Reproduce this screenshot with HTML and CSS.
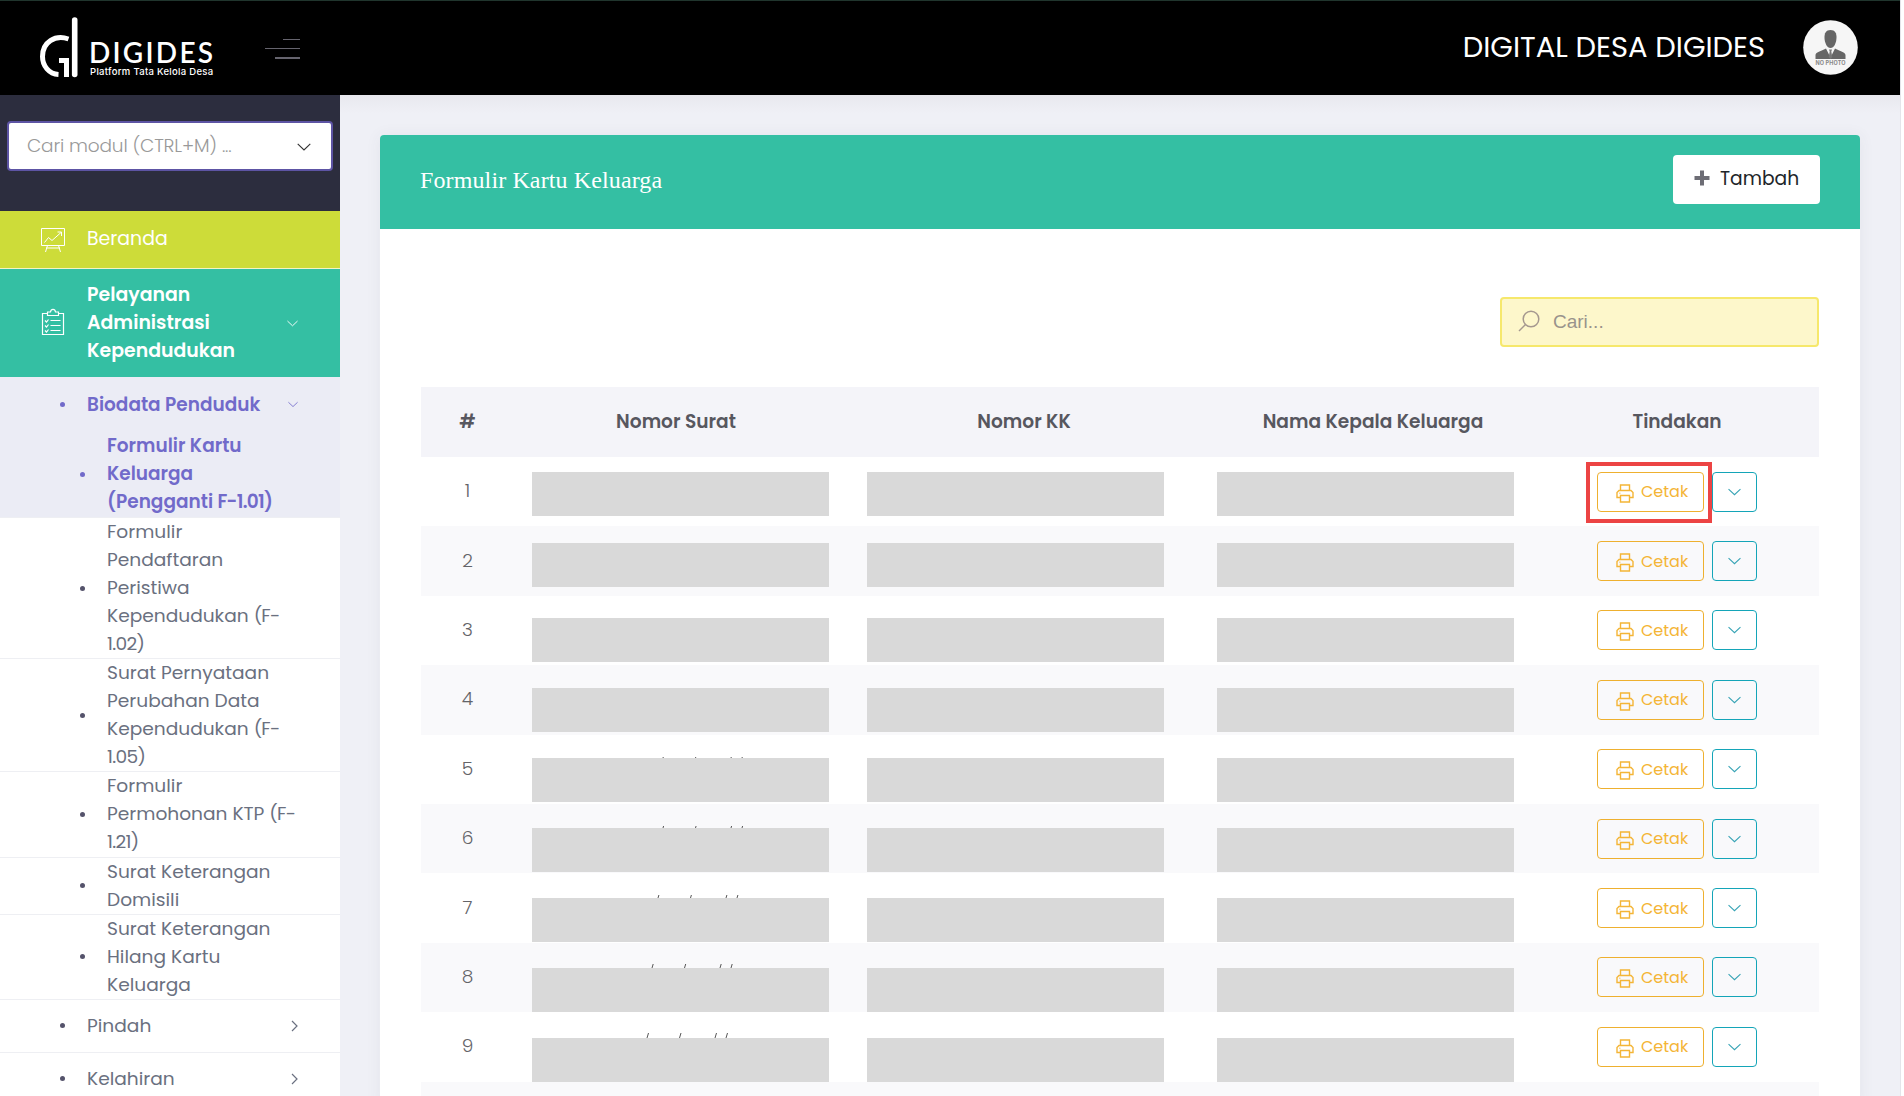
FILE: index.html
```
<!DOCTYPE html>
<html lang="id">
<head>
<meta charset="utf-8">
<title>Formulir Kartu Keluarga</title>
<link rel="stylesheet" href="styles.css">
</head>
<body>
<svg class="defs" width="0" height="0">
  <symbol id="down" viewBox="0 0 12 7"><path d="M.5 .8 6 6 11.5 .8" fill="none" stroke="currentColor"/></symbol>
  <symbol id="right" viewBox="0 0 7 12"><path d="M1 1 6 6 1 11" fill="none" stroke="currentColor" stroke-width="1.2"/></symbol>
  <symbol id="printer" viewBox="0 0 18 19"><path d="M4.5 6.500V1h9v5.500M4.500 13.500H1V8.500L3 6.500H15L17 8.500V13.500H13.500M4.500 11.500H13.500V18H4.500ZM3.500 9.200h.8" fill="none" stroke="currentColor" stroke-width="1.4"/></symbol>
</svg>
<div class="page">
  <header class="topbar">
    <div class="brand">
      <svg class="mark" width="40" height="62" viewBox="0 0 40 62" fill="none" stroke="#fff">
        <path d="M29.500 23C16 18.500 3.500 26 3.500 40.500C3.500 50 10 58 19.500 58.500" stroke-width="5"/>
        <path d="M20 44.500H27.500V61" stroke-width="5"/>
        <path d="M35.700 4V58.500" stroke-width="5.600" stroke-linecap="round"/>
      </svg>
      <div class="wordmark"><span class="name">DIGIDES</span><span class="tagline">Platform Tata Kelola Desa</span></div>
    </div>
    <div class="toggle"><i class="l1"></i><i class="l2"></i><i class="l3"></i></div>
    <div class="village">DIGITAL DESA DIGIDES</div>
    <svg class="avatar" width="55" height="55" viewBox="0 0 55 55">
      <circle cx="27.500" cy="27.500" r="27.300" fill="#f6f6f6"/>
      <path d="M27.500 10c4.500 0 6.200 3 6 8-.2 5-2.500 10-6 10s-5.800-5-6-10c-.2-5 1.500-8 6-8Z" fill="#666"/>
      <path d="M12.500 39v-4c0-3 7-4.500 10.500-6.500l4.500 9 4.500-9c3.500 2 10.500 3.500 10.500 6.500v4Z" fill="#666"/>
      <path d="M26 29.500h3l-.7 2 1 5.500-1.800 2-1.800-2 1-5.500Z" fill="#777"/>
      <text x="27.500" y="45.300" text-anchor="middle" textLength="30" class="nophoto">NO PHOTO</text>
    </svg>
  </header>
  <aside class="sidebar">
    <div class="module-search"><div class="select"><span>Cari modul (CTRL+M) ...</span><svg width="14" height="8"><use href="#down"/></svg></div></div>
    <div class="item home">
      <svg class="ico" width="26" height="26" viewBox="0 0 26 26" fill="none" stroke="currentColor" stroke-width="1"><path d="M1.500 1.500H24.500V18.500H1.500ZM4.500 15.500 8.500 10.500 12 13.500 21 5.500M17.500 5H21.500V9M6 21H20M7.500 18.500 5.500 25M18.500 18.500 20.500 25"/></svg>
      <span class="label">Beranda</span>
    </div>
    <div class="item service">
      <svg class="ico" width="26" height="28" viewBox="0 0 26 28" fill="none" stroke="currentColor" stroke-width="1.200"><path d="M8 5.500H2.500V26.500H23.500V5.500H18M7.500 7.500V4H10.500C11 .5 15 .5 15.500 4H18.500V7.500ZM10.500 12.500H20.500M10.500 17.500H20.500M10.500 22.500H20.500M5 12.500 6.500 14 8.500 11.500M5 17.500 6.500 19 8.500 16.500M5 22.500 6.500 24 8.500 21.500"/></svg>
      <span class="label bold">Pelayanan<br>Administrasi<br>Kependudukan</span>
      <svg class="arrow" width="11" height="7"><use href="#down"/></svg>
    </div>
    <div class="active-group">
      <div class="sub lead"><i class="dot"></i><span class="label bold">Biodata Penduduk</span><svg class="arrow" width="10" height="7"><use href="#down"/></svg></div>
      <div class="leaf"><i class="dot"></i><span class="label bold">Formulir Kartu<br>Keluarga<br>(Pengganti <span class="code">F-1.01)</span></span></div>
    </div>
    <div class="leaf"><i class="dot"></i><span class="label">Formulir<br>Pendaftaran<br>Peristiwa<br>Kependudukan <span class="code">(F-<br>1.02)</span></span></div>
    <div class="leaf"><i class="dot"></i><span class="label">Surat Pernyataan<br>Perubahan Data<br>Kependudukan <span class="code">(F-<br>1.05)</span></span></div>
    <div class="leaf"><i class="dot"></i><span class="label">Formulir<br>Permohonan KTP <span class="code">(F-<br>1.21)</span></span></div>
    <div class="leaf"><i class="dot"></i><span class="label">Surat Keterangan<br>Domisili</span></div>
    <div class="leaf"><i class="dot"></i><span class="label">Surat Keterangan<br>Hilang Kartu<br>Keluarga</span></div>
    <div class="sub"><i class="dot"></i><span class="label">Pindah</span><svg class="arrow" width="7" height="12"><use href="#right"/></svg></div>
    <div class="sub"><i class="dot"></i><span class="label">Kelahiran</span><svg class="arrow" width="7" height="12"><use href="#right"/></svg></div>
  </aside>
  <main class="content">
    <section class="card">
      <div class="card-head">
        <h1>Formulir Kartu Keluarga</h1>
        <button class="add"><svg width="16" height="16" viewBox="0 0 16 16"><path d="M6 .5h4V6h5.500v4H10v5.500H6V10H.5V6H6Z" fill="#6d6d75"/></svg><span>Tambah</span></button>
      </div>
      <div class="card-body">
        <div class="search"><svg width="22" height="22" viewBox="0 0 22 22" fill="none" stroke="#a5988f" stroke-width="1.500"><circle cx="13" cy="9" r="7.800"/><path d="M7.500 14.500 1 21"/></svg><span>Cari...</span></div>
        <div class="table" id="table">
          <div class="row head"><span>#</span><span>Nomor Surat</span><span>Nomor KK</span><span>Nama Kepala Keluarga</span><span>Tindakan</span></div>
        </div>
      </div>
    </section>
  </main>
</div>
<script src="table.js"></script>
</body>
</html>
```
FILE: table.js
```
const table = document.getElementById('table');
// offset: top of the masks inside the row; ticks: [first x, height] of strokes above the mask
const rows = [
  { offset: 15 }, { offset: 16.6 }, { offset: 22.2 }, { offset: 22.8 },
  { offset: 23.4, ticks: [131, 1] }, { offset: 24, ticks: [131, 2] },
  { offset: 24.6, ticks: [126, 3] }, { offset: 25.2, ticks: [120, 4] },
  { offset: 25.8, ticks: [115, 5] }
];
rows.forEach((r, i) => {
  const mask = c => `<span class="cell"><i class="mask ${c}" style="top:${r.offset}px"></i></span>`;
  let strokes = '';
  if (r.ticks) {
    const [x, h] = r.ticks;
    strokes = `<svg class="ticks" width="297" height="${h}" style="top:${r.offset - h}px">` +
      [0, 32.500, 68, 79].map(d => `<path d="M${x + d} ${h}l${h * 0.3} ${-h}" stroke="#555"/>`).join('') + '</svg>';
  }
  const row = document.createElement('div');
  row.className = 'row';
  row.innerHTML = `<span class="num">${i + 1}</span>` +
    `<span class="cell"><i class="mask a" style="top:${r.offset}px"></i>${strokes}</span>` + mask('b') + mask('c') +
    `<span class="actions"><button class="print"><svg width="18" height="19"><use href="#printer"/></svg><span>Cetak</span></button>` +
    `<button class="more"><svg width="13" height="8"><use href="#down"/></svg></button>${i === 0 ? '<i class="highlight"></i>' : ''}</span>`;
  table.append(row);
});
const next = document.createElement('div');
next.className = 'row';
table.append(next);
```
FILE: styles.css
```
* { box-sizing: border-box; }
body { margin: 0; height: 1096px; overflow: hidden; background: #fff; font-family: Poppins, Inter, "Open Sans", sans-serif; font-feature-settings: "cv11"; color: #6a7080; }
.defs { position: absolute; }
.page { display: grid; grid-template-columns: 340px 1fr; grid-template-rows: 95px 1001px; width: 1901px; height: 1096px; border-right: 1px solid #e4e5ea; overflow: hidden; }
.topbar { grid-column: 1 / 3; display: flex; background: #000; border-top: 1px solid #20352d; position: relative; margin-right: -1px; }
.topbar::after { content: ""; position: absolute; left: 340px; right: 0; top: 94px; height: 18px; background: linear-gradient(#e8e8ee, #eff0f600); }
.brand { display: flex; width: 265px; padding: 15px 0 0 39px; gap: 10px; }
.mark { flex: none; }
.wordmark { display: flex; flex-direction: column; color: #fff; padding-top: 22px; }
.name { font: 600 28px/28px Lato, sans-serif; letter-spacing: 2.25px; white-space: nowrap; }
.tagline { font: 500 9.500px/12px Inter, sans-serif; white-space: nowrap; margin: 0 0 0 1px; letter-spacing: .3px; }
.toggle { display: flex; flex-direction: column; align-items: flex-end; gap: 8px; width: 35px; padding-top: 38px; }
.toggle i { height: 1px; background: #66646e; }
.l1 { width: 17px; } .l2 { width: 35px; } .toggle .l3 { width: 25px; height: 2px; }
.village { margin-left: auto; color: #fff; font-size: 29px; line-height: 93px; font-weight: 400; white-space: nowrap; }
.avatar { margin: 19px 43px 0 38px; }
.nophoto { font: 700 5.500px Inter, sans-serif; fill: #888; }
.sidebar { background: #fff; overflow: hidden; font-size: 18.600px; line-height: 28px; }
.module-search { height: 116px; background: #2c2d3e; padding: 26px 7px; }
.select { display: flex; align-items: center; justify-content: space-between; height: 50px; border: 2px solid #5d54a4; border-radius: 4px; background: #fff; color: #999; padding: 0 20px 0 18px; font-size: 18.500px; font-weight: 300; letter-spacing: -.15px; }
.select svg { color: #333; margin-top: 2px; }
.item { display: grid; grid-template-columns: 87px 1fr 54px; align-items: center; color: #fff; font-size: 18.900px; }
.ico { margin-left: 40px; }
.arrow { justify-self: start; margin-left: 1px; }
.home { height: 58px; background: #cddc39; border-bottom: 1px solid #f2f5c5; }
.home .label { margin-top: -1px; }
.service { height: 108px; background: #34bfa3; }
.service .ico { margin-top: -2px; }
.label { white-space: nowrap; font-weight: 400; }
.bold { font-weight: 600; }
.code { letter-spacing: -.7px; }
.active-group { background: #ebecf5; color: #716aca; height: 140px; font-size: 18.500px; }
.sub { display: grid; grid-template-columns: 60px 27px 1fr 50px; align-items: center; height: 53px; border-top: 1px solid #eeeff3; }
.sub .dot { grid-column: 2; }
.leaf { display: grid; grid-template-columns: 80px 27px 1fr; align-items: center; border-top: 1px solid #eeeff3; padding-bottom: .2px; }
.leaf .dot { grid-column: 2; }
.active-group .sub, .active-group .leaf { border: 0; }
.active-group .lead { height: 55px; }
.lead .arrow { margin-left: -2px; }
.dot { width: 5px; height: 5px; border-radius: 50%; background: #55536b; }
.active-group .dot { background: #716aca; }
.content { background: #eff0f6; padding: 40px 40px 0; }
.card { height: 970px; background: #fff; border-radius: 4px; box-shadow: 0 1px 15px 1px rgba(69, 65, 78, .06); overflow: hidden; }
.card-head { height: 94px; background: #34bfa3; display: flex; align-items: flex-start; justify-content: space-between; padding: 20px 40px; }
h1 { margin: 0; font: 400 24px/50px "Liberation Serif", serif; color: #fff; letter-spacing: .12px; }
.add { display: flex; align-items: center; gap: 10px; width: 147px; height: 49px; border: 0; border-radius: 4px; background: #fff; color: #212529; font: 400 18.700px/24px Poppins, Inter, sans-serif; font-feature-settings: inherit; padding: 0 0 2px 21px; }
.add svg { margin-top: -1px; }
.card-body { padding: 68px 41px 0; }
.search { display: flex; align-items: center; gap: 13px; width: 319px; height: 50px; margin-left: auto; border: 2px solid #f6e86c; border-radius: 4px; background: #fdf7cb; padding: 0 16px 1px; color: #99938c; font: 400 19px "Liberation Sans", sans-serif; }
.search svg { margin-top: -2px; }
.table { margin-top: 40px; }
.row { display: grid; grid-template-columns: 92px 326px 370px 328px 280px 2px; height: 69.400px; align-items: center; justify-items: center; font-size: 18.600px; color: #646468; }
.row:nth-child(odd) { background: #f9f9fb; }
.row.head { height: 70px; background: #f4f4f9; font-weight: 600; color: #57575f; padding-bottom: 1px; }
.num { font-weight: 300; margin-top: -2px; }
.row > span:first-child { padding-left: 1px; }
.cell { position: relative; align-self: stretch; justify-self: stretch; }
.mask { position: absolute; width: 297px; height: 44px; background: #d9d9d9; }
.a, .ticks { left: 19px; } .b { left: 28px; } .c { left: 8px; }
.ticks { position: absolute; }
.actions { position: relative; display: flex; gap: 8px; justify-self: start; margin-left: 60px; }
.actions button { display: flex; align-items: center; height: 40px; background: transparent; border: 1px solid #eeb02f; border-radius: 4px; padding: 0; }
.print { width: 107px; color: #f4b536; gap: 7px; font: 400 16px Poppins, Inter, sans-serif; font-feature-settings: "cv11"; }
.actions .print { padding-left: 18px; }
.print svg { margin-top: 3px; }
.actions .more { width: 45px; border-color: #14a5b8; color: #36a3b5; justify-content: center; }
.highlight { position: absolute; left: -11px; top: -10px; width: 126px; height: 61px; border: 4px solid #ec4444; }
```
